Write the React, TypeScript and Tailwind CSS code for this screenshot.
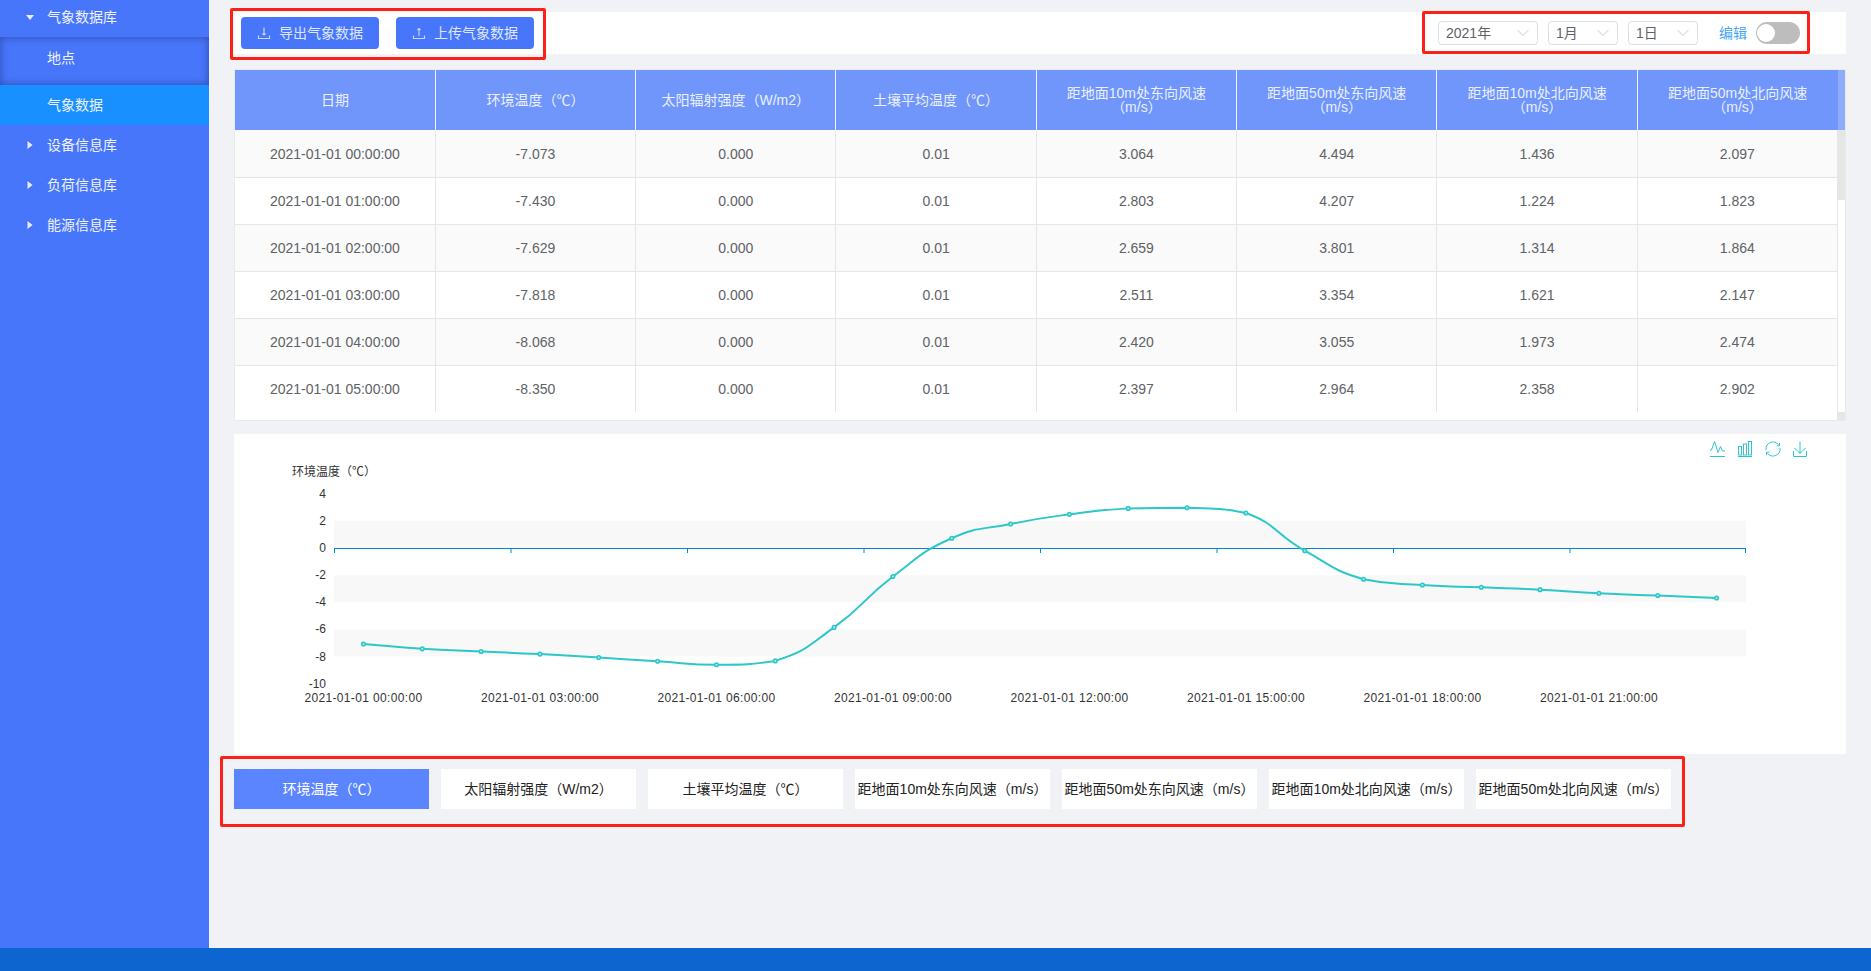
import { ChevronDown } from "lucide-react";

const font = { fontFamily: '"Liberation Sans", "Noto Sans CJK SC", sans-serif' };

const headers = [
  "日期",
  "环境温度（℃）",
  "太阳辐射强度（W/m2）",
  "土壤平均温度（℃）",
  "距地面10m处东向风速（m/s）",
  "距地面50m处东向风速（m/s）",
  "距地面10m处北向风速（m/s）",
  "距地面50m处北向风速（m/s）",
];

const rows = [
  ["2021-01-01 00:00:00", "-7.073", "0.000", "0.01", "3.064", "4.494", "1.436", "2.097"],
  ["2021-01-01 01:00:00", "-7.430", "0.000", "0.01", "2.803", "4.207", "1.224", "1.823"],
  ["2021-01-01 02:00:00", "-7.629", "0.000", "0.01", "2.659", "3.801", "1.314", "1.864"],
  ["2021-01-01 03:00:00", "-7.818", "0.000", "0.01", "2.511", "3.354", "1.621", "2.147"],
  ["2021-01-01 04:00:00", "-8.068", "0.000", "0.01", "2.420", "3.055", "1.973", "2.474"],
  ["2021-01-01 05:00:00", "-8.350", "0.000", "0.01", "2.397", "2.964", "2.358", "2.902"],
];

const temps = [
  -7.073, -7.43, -7.629, -7.818, -8.068, -8.35, -8.6, -8.32, -5.85, -2.1, 0.72, 1.77, 2.48, 2.92, 2.96, 2.58, -0.2,
  -2.3, -2.73, -2.9, -3.07, -3.34, -3.5, -3.68,
];

const UpDownIcon = ({ up }: { up?: boolean }) => (
  <svg width="14" height="14" viewBox="0 0 14 14" fill="none" stroke="#c9d6fb" strokeWidth="1.2">
    <path d="M1.5 9.5v3h11v-3" />
    {up ? <path d="M7 10V2.5M5.5 4l1.5-1.5L8.5 4" /> : <path d="M7 1.5V9M5.5 7.5L7 9l1.5-1.5" />}
  </svg>
);

const Caret = ({ open }: { open?: boolean }) => (
  <svg width="8" height="8" viewBox="0 0 8 8" fill="#e8eeff">
    {open ? <path d="M0 2h8L4 7z" /> : <path d="M1.5 0l5 4-5 4z" />}
  </svg>
);

const Select = ({ label, width }: { label: string; width: string }) => (
  <div className={`flex h-[24px] items-center justify-between rounded-[4px] border border-[#dcdfe6] pl-[7px] pr-[4px] text-[14px] text-[#606266] ${width}`}>
    <span>{label}</span>
    <ChevronDown size={20} strokeWidth={1.1} color="#c0c4cc" />
  </div>
);

// same look as the echarts macarons line series
const Chart = () => {
  const w = 1612;
  const left = 100;
  const right = 1512;
  const zero = 114;
  const unit = 13.57;
  const step = (right - left) / 24;
  const pts = temps.map((t, i) => [left + step * (i + 0.5), zero - t * unit]);

  // echarts smooth: tangent split by segment length, control points clamped to the segment
  const smooth = 0.5;
  const cps = pts.map((p, i) => {
    const prev = pts[Math.max(i - 1, 0)];
    const next = pts[Math.min(i + 1, pts.length - 1)];
    const dx = next[0] - prev[0];
    const dy = next[1] - prev[1];
    const lenPrev = Math.hypot(p[0] - prev[0], p[1] - prev[1]);
    const lenNext = Math.hypot(next[0] - p[0], next[1] - p[1]);
    const ratio = lenNext / (lenNext + lenPrev);
    const clampY = (v: number, o: number) => Math.min(Math.max(v, Math.min(o, p[1])), Math.max(o, p[1]));
    return {
      before: [p[0] - dx * smooth * (1 - ratio), clampY(p[1] - dy * smooth * (1 - ratio), prev[1])],
      after: [p[0] + dx * smooth * ratio, clampY(p[1] + dy * smooth * ratio, next[1])],
    };
  });

  let d = `M${pts[0][0]} ${pts[0][1]}`;
  for (let i = 0; i < pts.length - 1; i++) {
    const c1 = cps[i].after;
    const c2 = cps[i + 1].before;
    d += ` C${c1[0]} ${c1[1]} ${c2[0]} ${c2[1]} ${pts[i + 1][0]} ${pts[i + 1][1]}`;
  }

  const yTicks = [4, 2, 0, -2, -4, -6, -8, -10];
  const bands = [2, -2, -6];
  const xLabels = ["00", "03", "06", "09", "12", "15", "18", "21"];

  return (
    <svg width={w} height="320" viewBox={`0 0 ${w} 320`} className="block">
      {bands.map((b) => (
        <rect key={b} x={left} y={zero - b * unit} width={right - left} height={unit * 2} fill="#f8f8f8" />
      ))}
      <line x1={left} x2={right} y1={zero + 0.5} y2={zero + 0.5} stroke="#008acd" strokeWidth="1.2" />
      {xLabels.map((_, i) => (
        <line key={i} x1={left + step * 3 * i + 0.5} x2={left + step * 3 * i + 0.5} y1={zero} y2={zero + 5} stroke="#008acd" />
      ))}
      <line x1={right - 0.5} x2={right - 0.5} y1={zero} y2={zero + 5} stroke="#008acd" />
      {yTicks.map((t) => (
        <text key={t} x="92" y={zero - t * unit + 4} textAnchor="end" fontSize="12" fill="#333" style={font}>
          {t}
        </text>
      ))}
      <text x="100" y="42" textAnchor="middle" fontSize="12" fill="#333" style={font}>
        环境温度（℃）
      </text>
      {xLabels.map((h, i) => (
        <text key={h} x={left + step * (3 * i + 0.5)} y="268" textAnchor="middle" fontSize="12" fill="#333" letterSpacing="0.35" style={font}>
          {`2021-01-01 ${h}:00:00`}
        </text>
      ))}
      <path d={d} fill="none" stroke="#2ec7c9" strokeWidth="2" />
      {pts.map((p, i) => (
        <circle key={i} cx={p[0]} cy={p[1]} r="1.8" fill="#a8e8e9" stroke="#2ec7c9" strokeWidth="1.5" />
      ))}
    </svg>
  );
};

const ToolIcons = () => (
  <div className="absolute right-[39px] top-[7px] flex items-start gap-[13px]">
    <svg width="15" height="16" viewBox="0 0 15 16" fill="none" stroke="#2ec7c9" strokeWidth="1">
      <path d="M0 15.5h15" />
      <path d="M0 9.5L1.5 9 4.5 0.5 8 11.5 10.5 5.5 12.5 10h2.5" />
    </svg>
    <svg width="14" height="16" viewBox="0 0 14 16" fill="none" stroke="#2ec7c9" strokeWidth="1">
      <path d="M0 15.5h14" />
      <rect x="0.5" y="5.5" width="3" height="8.5" />
      <rect x="5.5" y="3" width="3" height="11" />
      <rect x="10.5" y="0.5" width="3" height="13.5" />
    </svg>
    <svg width="16" height="16" viewBox="0 0 16 16" fill="none" stroke="#2ec7c9" strokeWidth="1">
      <path d="M1 9A7 7 0 0 1 13.5 3.8" />
      <path d="M15 7A7 7 0 0 1 2.5 12.2" />
      <path d="M14.5 2v2.8h-2.8M1.5 14v-2.8h2.8" />
    </svg>
    <svg width="14" height="16" viewBox="0 0 14 16" fill="none" stroke="#2ec7c9" strokeWidth="1" className="-ml-[1px]">
      <path d="M0.5 10v5.5h13V10" />
      <path d="M7 0.5V12.5M1.5 7l5.5 5.5L12.5 7" />
    </svg>
  </div>
);

const SideItem = ({ label, open }: { label: string; open?: boolean }) => (
  <div className="flex h-[40px] items-center gap-[13px] pl-[26px] text-[14px] text-[#eef2ff]">
    <Caret open={open} />
    <span>{label}</span>
  </div>
);

const RedBox = ({ className }: { className: string }) => (
  <div className={`pointer-events-none absolute rounded-[2px] border-[3px] border-[#fb2018] ${className}`} />
);

export default function App() {
  return (
    <div className="flex h-[971px] w-[1871px] flex-col overflow-hidden bg-[#f0f2f5]" style={font}>
      <div className="flex min-h-0 flex-1">
        <aside className="w-[209px] shrink-0 bg-[#4876fb] pt-0">
          <div className="-mt-[3px]">
            <SideItem label="气象数据库" open />
          </div>
          <div className="flex h-[48px] items-start pl-[47px] pt-[11px] text-[14px] text-[#eef2ff] shadow-[inset_0_0_8px_rgba(20,40,110,0.55)]">
            地点
          </div>
          <div className="flex h-[40px] items-center bg-[#1890ff] pl-[47px] text-[14px] text-[#eef2ff]">气象数据</div>
          <SideItem label="设备信息库" />
          <SideItem label="负荷信息库" />
          <SideItem label="能源信息库" />
        </aside>

        <main className="relative flex-1 px-[25px] pt-[12px]">
          <div className="flex h-[42px] items-center justify-between bg-white pl-[7px] pr-[46px]">
            <div className="flex gap-[17px]">
              <button className="flex h-[32px] w-[138px] items-center justify-center gap-[8px] rounded-[4px] bg-[#4876fb] text-[14px] text-[#dfe7ff]">
                <UpDownIcon />
                导出气象数据
              </button>
              <button className="flex h-[32px] w-[138px] items-center justify-center gap-[8px] rounded-[4px] bg-[#4876fb] text-[14px] text-[#dfe7ff]">
                <UpDownIcon up />
                上传气象数据
              </button>
            </div>
            <div className="flex items-center">
              <Select label="2021年" width="w-[100px]" />
              <div className="w-[10px]" />
              <Select label="1月" width="w-[70px]" />
              <div className="w-[10px]" />
              <Select label="1日" width="w-[70px]" />
              <span className="ml-[21px] text-[14px] text-[#46a6f5]">编辑</span>
              <div className="ml-[9px] h-[22px] w-[44px] rounded-full bg-[#bdbdbd] p-[2px] pl-[1px]">
                <div className="h-[18px] w-[18px] rounded-full bg-white" />
              </div>
            </div>
          </div>

          <div className="mt-[15px] h-[352px] w-[1612px] border border-[#e8eaee] bg-white">
            <div className="flex h-[342px]">
              <table className="w-[1603px] table-fixed border-collapse self-start text-center text-[14px]">
                <thead>
                  <tr className="h-[60px] bg-[#7096fb] text-[#eaf0ff]">
                    {headers.map((h) => (
                      <th key={h} className="border-r border-[#eef2ff] px-[10px] text-[14px] font-normal leading-[14px] last:border-r-0">
                        {h}
                      </th>
                    ))}
                  </tr>
                </thead>
                <tbody>
                  {rows.map((r, i) => (
                    <tr key={r[0]} className={`h-[47px] text-[#606266] ${i % 2 === 0 ? "bg-[#fafafa]" : "bg-white"}`}>
                      {r.map((c, j) => (
                        <td key={j} className={`border-r border-[#e6e6e6] pt-[2px] ${i < 5 ? "border-b" : ""}`}>
                          {c}
                        </td>
                      ))}
                    </tr>
                  ))}
                </tbody>
              </table>
              <div className="flex w-[7px] flex-col">
                <div className="h-[60px] bg-[#8fabfb]" />
                <div className="h-[70px] bg-[#e6e6e6]" />
              </div>
            </div>
            <div className="flex h-[8px] justify-end">
              <div className="w-[8px] bg-[#e6e6e6]" />
            </div>
          </div>

          <div className="relative mt-[13px] h-[320px] bg-white">
            <ToolIcons />
            <Chart />
          </div>

          <div className="mt-[15px] flex gap-[12px]">
            {headers.slice(1).map((h, i) => (
              <div
                key={h}
                className={`flex h-[40px] w-[195px] items-center justify-center whitespace-nowrap text-[14px] ${
                  i === 0 ? "bg-[#5b84ff] text-white" : "bg-white text-[#222]"
                }`}
              >
                {h}
              </div>
            ))}
          </div>

          <RedBox className="left-[21px] top-[8px] h-[52px] w-[316px]" />
          <RedBox className="left-[1213px] top-[11px] h-[43px] w-[388px]" />
          <RedBox className="left-[11px] top-[756px] h-[71px] w-[1465px]" />
        </main>
      </div>
      <footer className="h-[23px] shrink-0 bg-[#0d66cf]" />
    </div>
  );
}
